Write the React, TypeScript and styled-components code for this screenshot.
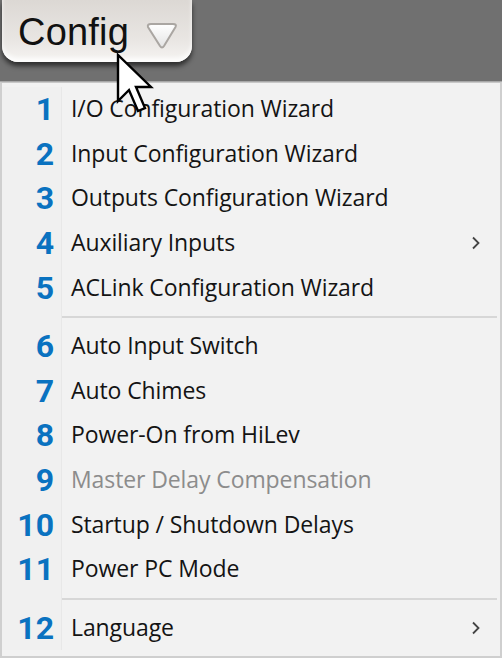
import React from "react";
import styled, { createGlobalStyle } from "styled-components";

const Global = createGlobalStyle`
  html, body { margin: 0; padding: 0; background: #f2f2f2; }
  body { width: 502px; height: 658px; overflow: hidden; font-family: "Open Sans", "Noto Sans", sans-serif; }
`;

const Page = styled.div`
  position: relative;
  width: 502px;
  height: 658px;
  display: flex;
  flex-direction: column;
`;

const TopBar = styled.div`
  height: 82px;
  background: #707070;
  display: flex;
  align-items: flex-start;
  padding-left: 2px;
  border-bottom: 1px solid #a8a8a8;
  box-sizing: border-box;
`;

const ConfigButton = styled.div`
  width: 190px;
  height: 62px;
  box-sizing: border-box;
  border-radius: 0 0 16px 16px;
  background: linear-gradient(#dcd8d4, #e9e6e3 65%, #f6f4f2);
  box-shadow: 0 4px 5px rgba(0,0,0,0.6), inset 0 -4px 4px rgba(255,255,255,0.8);
  display: flex;
  align-items: center;
  padding: 2px 0 0 16px;
  gap: 16px;
`;

const ButtonLabel = styled.span`
  font-family: "Liberation Sans", Arial, sans-serif;
  font-size: 38px;
  color: #111;
  letter-spacing: 0.2px;
`;

const Menu = styled.div`
  flex: 1;
  border: 2px solid #cfcfcf;
  border-top: 1px solid #c8c8c8;
  background: #f2f2f2;
  display: flex;
  flex-direction: column;
  padding-top: 4px;
  box-sizing: border-box;
`;

const Row = styled.div`
  display: grid;
  grid-template-columns: 60px 1fr 40px;
  height: 44.6px;
  align-items: center;
`;

const Num = styled.div`
  height: 100%;
  display: flex;
  align-items: center;
  justify-content: flex-end;
  padding-right: 7px;
  box-sizing: border-box;
  font-family: "Roboto", "Liberation Sans", sans-serif;
  font-weight: 700;
  font-size: 32px;
  color: #0a72c0;
  background: #f0f0f0;
  border-right: 1px solid #e8e8e8;
`;

const Label = styled.div<{ $disabled?: boolean }>`
  padding-left: 9px;
  font-size: 23px;
  color: ${(p) => (p.$disabled ? "#8c8c8c" : "#141414")};
  white-space: nowrap;
  padding-bottom: 2px;
  letter-spacing: -0.1px;
`;

const Arrow = styled.div`
  display: flex;
  align-items: center;
  justify-content: flex-start;
  padding-left: 11px;
`;

const SepRow = styled.div`
  display: grid;
  grid-template-columns: 60px 1fr;
  height: 14px;
  align-items: center;
`;

const SepGutter = styled.div`
  height: 100%;
  background: #f0f0f0;
  border-right: 1px solid #e8e8e8;
`;

const SepLine = styled.div`
  height: 2px;
  background: #d7d7d7;
  margin-right: 3px;
`;

const Cursor = styled.svg`
  position: absolute;
  left: 116px;
  top: 53px;
`;

const Chevron = () => (
  <svg width="10" height="14" viewBox="0 0 10 14">
    <path d="M2 1.5 L7.5 7 L2 12.5" fill="none" stroke="#444" strokeWidth="1.8" />
  </svg>
);

type Item = { t: string; sub?: boolean; dis?: boolean } | null;

const items: Item[] = [
  { t: "I/O Configuration Wizard" },
  { t: "Input Configuration Wizard" },
  { t: "Outputs Configuration Wizard" },
  { t: "Auxiliary Inputs", sub: true },
  { t: "ACLink Configuration Wizard" },
  null,
  { t: "Auto Input Switch" },
  { t: "Auto Chimes" },
  { t: "Power-On from HiLev" },
  { t: "Master Delay Compensation", dis: true },
  { t: "Startup / Shutdown Delays" },
  { t: "Power PC Mode" },
  null,
  { t: "Language", sub: true },
];

export default function App() {
  let n = 0;
  return (
    <Page>
      <Global />
      <TopBar>
        <ConfigButton>
          <ButtonLabel>Config</ButtonLabel>
          <svg width="34" height="30" viewBox="0 0 34 30" style={{ marginTop: 8 }}>
            <defs>
              <linearGradient id="tri" x1="0" y1="0" x2="0" y2="1">
                <stop offset="0" stopColor="#ffffff" />
                <stop offset="1" stopColor="#e4e4e4" />
              </linearGradient>
            </defs>
            <path d="M3 6 Q2 3 6 3 L28 3 Q32 3 30.5 6 L19 25 Q17 28 15 25 Z" fill="url(#tri)" stroke="#aaa6a2" strokeWidth="2" />
          </svg>
        </ConfigButton>
      </TopBar>
      <Menu>
        {items.map((it, i) => {
          if (!it) {
            return (
              <SepRow key={i}>
                <SepGutter />
                <SepLine />
              </SepRow>
            );
          }
          n += 1;
          return (
            <Row key={i}>
              <Num>{n}</Num>
              <Label $disabled={it.dis}>{it.t}</Label>
              <Arrow>{it.sub ? <Chevron /> : null}</Arrow>
            </Row>
          );
        })}
      </Menu>
      <Cursor width="40" height="62" viewBox="0 0 40 62">
        <path d="M2 2 L2 48 L13 37 L22 58 L29 55 L20 34 L35 34 Z" fill="#fff" stroke="#000" strokeWidth="2.4" strokeLinejoin="miter" />
      </Cursor>
    </Page>
  );
}
